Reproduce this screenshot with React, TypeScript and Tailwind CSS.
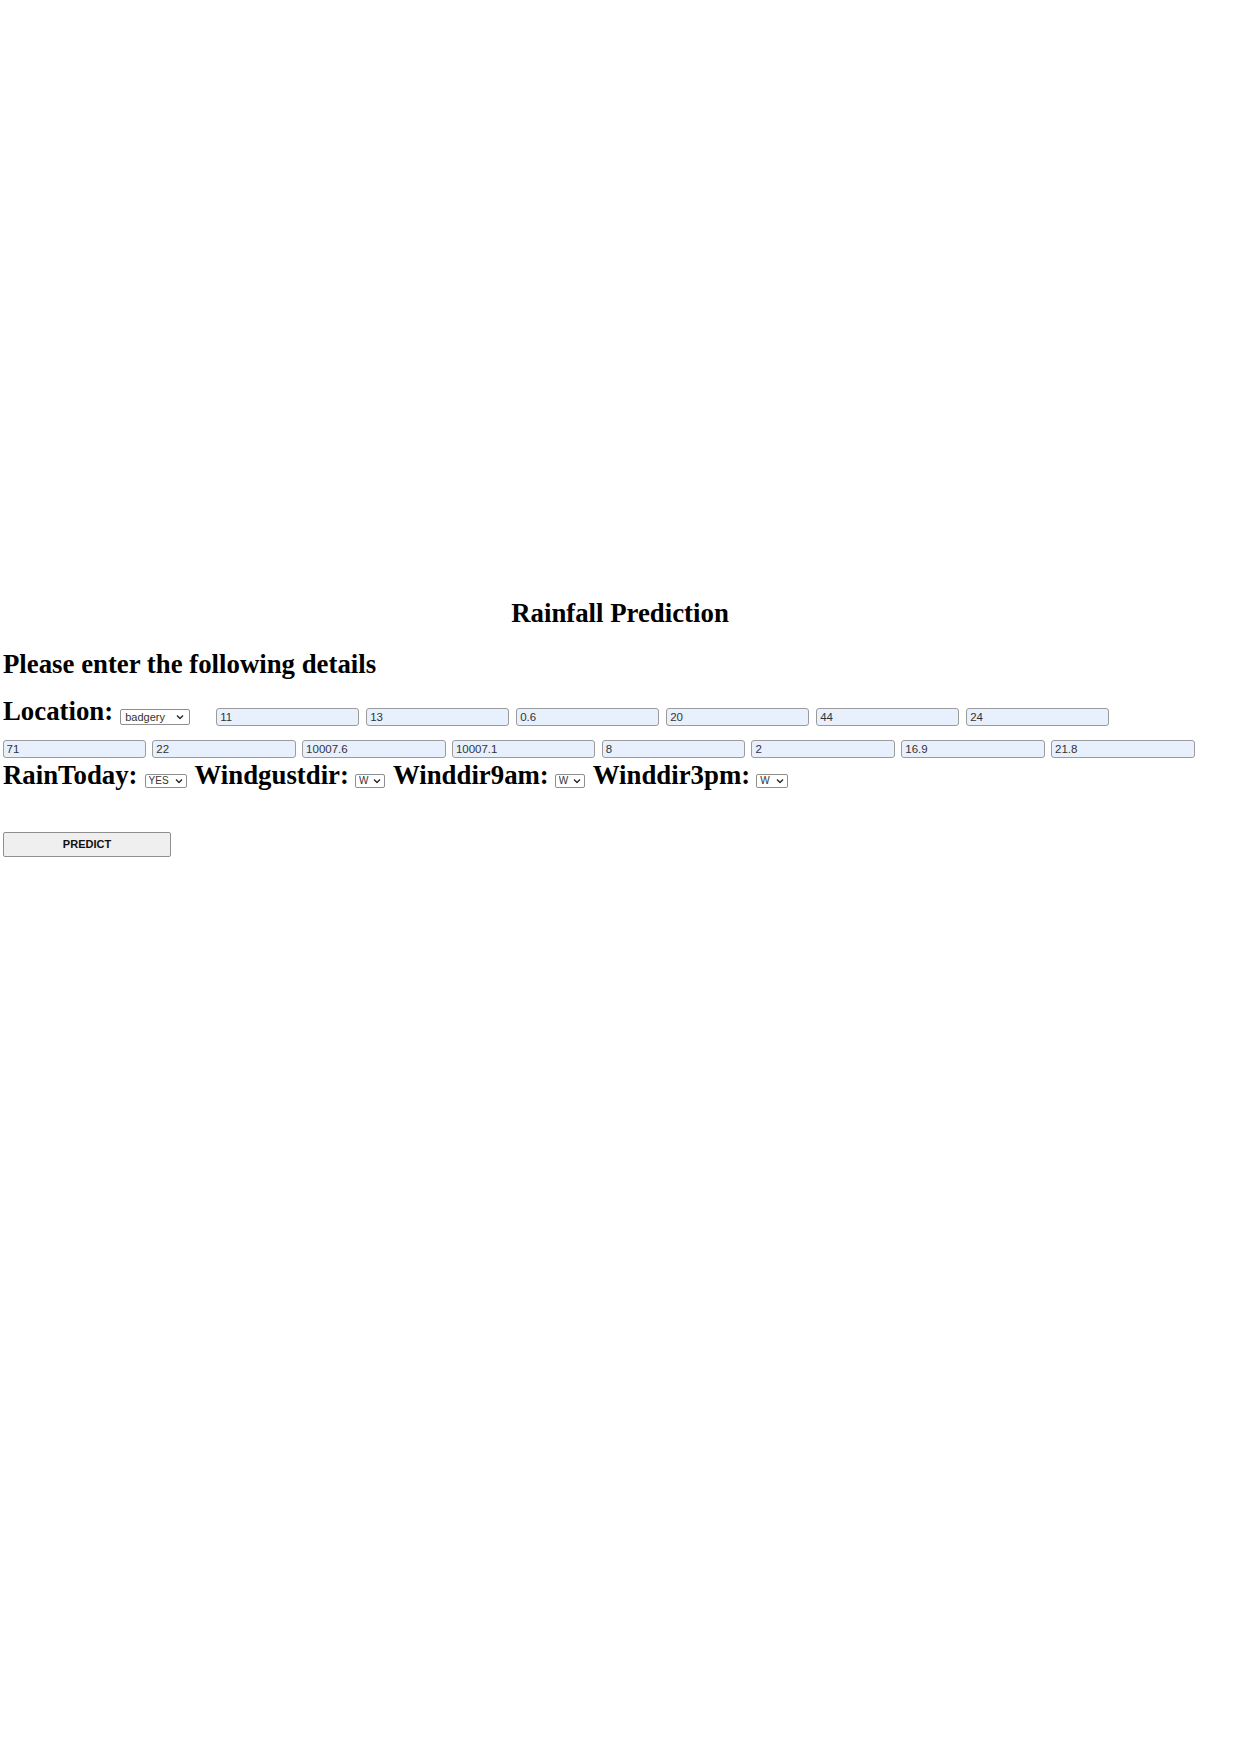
import { useState } from "react";

const row1 = ["11", "13", "0.6", "20", "44", "24"];
const row2 = ["71", "22", "10007.6", "10007.1", "8", "2", "16.9", "21.8"];

function Chevron({ right }: { right: string }) {
  return (
    <svg width="8" height="5" viewBox="0 0 8 5" className={`pointer-events-none absolute top-1/2 -translate-y-1/2 ${right}`}>
      <path d="M1 1 L4 4 L7 1" fill="none" stroke="#222" strokeWidth="1.3" />
    </svg>
  );
}

function SmallSelect({ value, options, className }: { value: string; options: string[]; className: string }) {
  const [v, setV] = useState(value);
  return (
    <div className={`relative shrink-0 ${className}`}>
      <select
        value={v}
        onChange={(e) => setV(e.target.value)}
        className="block h-full w-full appearance-none rounded-[2px] border border-[#8f8f8f] bg-white py-0 pl-[3px] pr-[12px] font-['Liberation_Sans',Arial,sans-serif] text-[10px] leading-[12px] text-[#333]"
      >
        {options.map((o) => (
          <option key={o} value={o}>{o}</option>
        ))}
      </select>
      <Chevron right="right-[4px]" />
    </div>
  );
}

function Field({ value, className }: { value: string; className: string }) {
  return (
    <input
      type="text"
      defaultValue={value}
      className={`block h-[18px] shrink-0 rounded-[3px] border border-[#9b9b9b] bg-[#e8f0fe] pl-[3px] font-['Liberation_Sans',Arial,sans-serif] text-[11.5px] text-[#333] outline-none ${className}`}
    />
  );
}

export default function App() {
  const label = "text-[26.8px] font-bold leading-[30px] whitespace-nowrap";

  return (
    <div className="min-h-[1755px] bg-white pt-[598px] font-['Liberation_Serif','Times_New_Roman',serif] text-black">
      <h1 className={`${label} text-center`}>Rainfall Prediction</h1>
      <h2 className={`${label} mt-[21px] pl-[3px]`}>Please enter the following details</h2>

      {/* Location + first values */}
      <div className="mt-[17px] flex h-[30px] items-start pl-[3px]">
        <span className={label}>Location:</span>
        <div className="relative ml-[7px] mt-[13px] h-[16px] w-[70px] shrink-0">
          <select
            defaultValue="badgery"
            className="block h-full w-full appearance-none rounded-[2px] border border-[#8f8f8f] bg-white py-0 pl-[4px] pr-[14px] font-['Liberation_Sans',Arial,sans-serif] text-[11px] leading-[14px] text-[#333]"
          >
            <option value="badgery">badgery</option>
            <option value="albury">albury</option>
            <option value="sydney">sydney</option>
          </select>
          <Chevron right="right-[6px]" />
        </div>
        <div className="ml-[26px] mt-[12px] flex gap-[7px]">
          {row1.map((v, i) => (
            <Field key={i} value={v} className="w-[143px]" />
          ))}
        </div>
      </div>

      {/* second row of values */}
      <div className="mt-[14px] flex gap-[6.3px] pl-[2.5px]">
        {row2.map((v, i) => (
          <Field key={i} value={v} className="w-[143.5px]" />
        ))}
      </div>

      {/* Rain / wind selects */}
      <div className="mt-[2px] flex h-[30px] items-start pl-[3px]">
        <span className={label}>RainToday:</span>
        <SmallSelect value="YES" options={["YES", "NO"]} className="ml-[7px] mt-[14px] h-[14px] w-[42px]" />
        <span className={`${label} ml-[8px]`}>Windgustdir:</span>
        <SmallSelect value="W" options={["W", "N", "E", "S"]} className="ml-[6px] mt-[14px] h-[14px] w-[30px]" />
        <span className={`${label} ml-[8px]`}>Winddir9am:</span>
        <SmallSelect value="W" options={["W", "N", "E", "S"]} className="ml-[6px] mt-[14px] h-[14px] w-[30px]" />
        <span className={`${label} ml-[8px]`}>Winddir3pm:</span>
        <SmallSelect value="W" options={["W", "N", "E", "S"]} className="ml-[6px] mt-[14px] h-[14px] w-[32px]" />
      </div>

      <button
        type="button"
        className="ml-[3px] mt-[42px] h-[25px] w-[168px] rounded-[2px] border border-[#8f8f8f] bg-[#efefef] font-['Liberation_Sans',Arial,sans-serif] text-[11px] font-bold text-[#111]"
      >
        PREDICT
      </button>
    </div>
  );
}
